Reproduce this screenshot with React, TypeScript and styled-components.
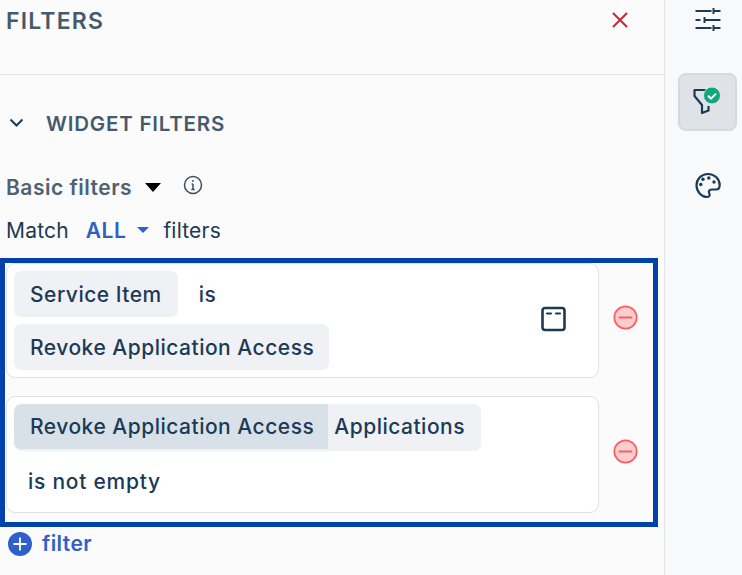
import React from "react";
import styled, { createGlobalStyle } from "styled-components";

const Global = createGlobalStyle`
  html, body { margin: 0; padding: 0; width: 742px; height: 575px; overflow: hidden; background: #fbfbfc; }
  body { font-family: Inter, "Liberation Sans", sans-serif; }
`;
const Page = styled.div`display: flex; width: 742px; height: 575px; overflow: hidden;`;
const Panel = styled.div`width: 664px; flex: none; display: flex; flex-direction: column;`;
const Header = styled.div`
  height: 75px; box-sizing: border-box; border-bottom: 1px solid #e3e4e6; padding: 7px 34px 0 6px;
  display: flex; justify-content: space-between; align-items: flex-start;
`;
const Title = styled.div`font-size: 23px; line-height: 28px; font-weight: 600; color: #465a6c; letter-spacing: 1.2px;`;
const Close = styled.svg`width: 20px; height: 20px; margin-top: 3px; color: #c8282d;`;
const SectionRow = styled.div`display: flex; align-items: center; height: 28px; margin-top: 34px; padding-left: 8px;`;
const Chevron = styled.svg`width: 17px; height: 17px; margin-top: -2px; color: #1d3a52;`;
const SectionTitle = styled.div`margin-left: 21px; font-size: 20.5px; font-weight: 600; color: #465a6c; letter-spacing: 0.8px;`;
const BasicRow = styled.div`display: flex; align-items: center; height: 28px; margin-top: 36px; padding-left: 6px;`;
const BasicLabel = styled.span`font-size: 21px; font-weight: 600; color: #4e6272; letter-spacing: 0.5px;`;
const BlackCaret = styled.span`
  width: 0; height: 0; margin-left: 13px; border-left: 8px solid transparent; border-right: 8px solid transparent;
  border-top: 9px solid #000;
`;
const InfoIcon = styled.svg`width: 20px; height: 20px; margin-left: 22px; margin-top: -4px; color: #3c4e5c;`;
const MatchRow = styled.div`display: flex; align-items: center; height: 28px; margin-top: 15px; padding-left: 6px; font-size: 21px; color: #1d3a52; letter-spacing: 0.2px;`;
const AllLabel = styled.span`margin-left: 17px; font-weight: 600; color: #2f5fcb; letter-spacing: 0.5px;`;
const BlueCaret = styled.span`
  width: 0; height: 0; margin: 0 14px 0 11px; border-left: 6px solid transparent; border-right: 6px solid transparent;
  border-top: 6px solid #2f5fcb;
`;
const Highlight = styled.div`
  box-sizing: border-box; width: 658px; height: 269px; margin-top: 14px; border: 5px solid #0041ab; padding: 0 0 0 1px;
  display: flex; flex-direction: column;
`;
const FilterLine = styled.div<{ $h: number; $top: number }>`
  display: flex; align-items: center; height: ${p => p.$h}px; margin-top: ${p => p.$top}px;
`;
const Card = styled.div`
  box-sizing: border-box; width: 593px; height: 100%; background: #fff; border: 1px solid #dfe1e4; border-radius: 9px;
  padding: 7px; display: flex; position: relative;
`;
const CardBody = styled.div`flex: 1; display: flex; flex-direction: column; gap: 7px;`;
const Line = styled.div`display: flex; align-items: center; font-size: 21px; font-weight: 500; color: #1b3a57; letter-spacing: 0.5px;`;
const Chip = styled.div<{ $right: number }>`
  height: 46px; box-sizing: border-box; display: flex; align-items: center; padding: 0 ${p => p.$right}px 0 16px; background: #eff1f4;
  border-radius: 7px;
`;
const Operator = styled.span`margin-left: 21px;`;
const SplitChip = styled.div`
  display: flex; align-items: flex-start; height: 47px; background: #eff1f4; border-radius: 7px; overflow: hidden;
`;
const SplitLeft = styled.div`height: 45px; display: flex; align-items: center; padding: 0 14px 0 16px; background: #d9e1e8; border-radius: 7px 0 0 7px;`;
const SplitRight = styled.div`height: 45px; display: flex; align-items: center; padding: 0 16px 0 6px;`;
const PlainText = styled(Line)`height: 47px; padding-left: 14px; margin-top: 0; letter-spacing: 0.75px;`;
const SquareIcon = styled.svg`width: 28px; height: 28px; margin: 34px 23px 0 0; color: #1b3a57;`;
const Remove = styled.svg`width: 25px; height: 25px; margin: -6px 0 0 14px;`;
const AddRow = styled.div`display: flex; align-items: center; height: 25px; margin-top: 4px; padding-left: 8px;`;
const AddLabel = styled.span`margin-left: 10px; font-size: 21px; font-weight: 600; color: #2f5fcb; letter-spacing: 0.4px;`;
const Side = styled.div`
  flex: 1; box-sizing: border-box; border-left: 1px solid #e3e5e9; background: #f8f9fa; padding: 6px 0 0 9px;
  display: flex; flex-direction: column; align-items: center; width: 78px;
`;
const SideIcon = styled.svg`width: 28px; height: 28px; color: #1b3a57;`;
const ActiveButton = styled.div`
  width: 59px; height: 58px; flex: none; box-sizing: border-box; margin: 39px 2px 0 0; border-radius: 8px; background: #dfe3e7; border: 2px solid #d5dade;
  display: flex; align-items: center; justify-content: center;
`;
const PaletteIcon = styled(SideIcon)`margin-top: 40px;`;

const RemoveIcon = () => (
  <Remove viewBox="0 0 25 25">
    <circle cx="12.5" cy="12.5" r="11.2" fill="#fdcccc" stroke="#fb5f62" strokeWidth="1.7" />
    <path d="M6.5 12.5h12" stroke="#fb5f62" strokeWidth="1.8" strokeLinecap="round" />
  </Remove>
);

export default function App() {
  return (
    <Page>
      <Global />
      <Panel>
        <Header>
          <Title>FILTERS</Title>
          <Close viewBox="0 0 20 20" fill="none" stroke="currentColor" strokeWidth="2">
            <path d="M3 3l14 14M17 3L3 17" />
          </Close>
        </Header>
        <SectionRow>
          <Chevron viewBox="0 0 17 17" fill="none" stroke="currentColor" strokeWidth="2"><path d="M2.5 5.500l6 6 6-6" /></Chevron>
          <SectionTitle>WIDGET FILTERS</SectionTitle>
        </SectionRow>
        <BasicRow>
          <BasicLabel>Basic filters</BasicLabel>
          <BlackCaret />
          <InfoIcon viewBox="0 0 20 20" fill="none" stroke="currentColor" strokeWidth="1.5">
            <circle cx="10" cy="10" r="8.5" />
            <path d="M10 9v5.500M8.300 14.500h3.400M8.600 9H10" />
            <circle cx="10" cy="6" r="0.9" fill="currentColor" stroke="none" />
          </InfoIcon>
        </BasicRow>
        <MatchRow>
          Match<AllLabel>ALL</AllLabel><BlueCaret />filters
        </MatchRow>
        <Highlight>
          <FilterLine $h={115} $top={0}>
            <Card>
              <CardBody>
                <Line><Chip $right={16}>Service Item</Chip><Operator>is</Operator></Line>
                <Line><Chip $right={15}>Revoke Application Access</Chip></Line>
              </CardBody>
              <SquareIcon viewBox="0 0 28 28" fill="none" stroke="currentColor" strokeWidth="2.6">
                <rect x="2.500" y="3" width="22" height="22" rx="2.5" />
                <path d="M7 8.500h4M16 8.500h4" strokeLinecap="round" strokeWidth="2.2" />
              </SquareIcon>
            </Card>
            <RemoveIcon />
          </FilterLine>
          <FilterLine $h={117} $top={18}>
            <Card>
              <CardBody>
                <Line>
                  <SplitChip>
                    <SplitLeft>Revoke Application Access</SplitLeft>
                    <SplitRight>Applications</SplitRight>
                  </SplitChip>
                </Line>
                <PlainText>is not empty</PlainText>
              </CardBody>
            </Card>
            <RemoveIcon />
          </FilterLine>
        </Highlight>
        <AddRow>
          <svg width="24" height="24" viewBox="0 0 24 24">
            <circle cx="12" cy="12" r="12" fill="#2f5fcb" />
            <path d="M12 5.500v13M5.500 12h13" stroke="#fff" strokeWidth="1.8" />
          </svg>
          <AddLabel>filter</AddLabel>
        </AddRow>
      </Panel>
      <Side>
        <SideIcon viewBox="0 0 28 28" fill="none" stroke="currentColor" strokeWidth="2">
          <path d="M1.500 5h16M19.500 2v6M19.500 5h7M1.500 14h5M10.500 11v6M10.500 14h16M1.500 22h16M19.500 19v6M19.500 22h7" />
        </SideIcon>
        <ActiveButton>
          <svg width="32" height="32" viewBox="0 0 32 32" fill="none">
            <path d="M15.500 4H3.500v6l7.500 9v8l6.500-2.500V20" stroke="#1b3a57" strokeWidth="2.2" strokeLinejoin="round" />
            <circle cx="21" cy="9.500" r="8.500" fill="#12a67e" stroke="#dfe3e7" strokeWidth="1" />
            <path d="M17 9.800l3 2.800 5-5" stroke="#fff" strokeWidth="2" />
          </svg>
        </ActiveButton>
        <PaletteIcon viewBox="0 0 28 28" fill="none" stroke="currentColor" strokeWidth="2.2">
          <path d="M14 3C7.500 3 2.500 8 2.500 14.500S8 26 13 26c3 0 3-2.200 2.200-3.800-.9-1.800.2-3.700 2.300-3.700H22c2.700 0 3.700-2 3.700-4.500C25.700 8 20.500 3 14 3z" />
          <circle cx="6.800" cy="13.500" r="1.700" fill="currentColor" stroke="none" />
          <circle cx="9" cy="8.300" r="1.700" fill="currentColor" stroke="none" />
          <circle cx="14.800" cy="7" r="1.700" fill="currentColor" stroke="none" />
          <circle cx="20" cy="11" r="1.700" fill="currentColor" stroke="none" />
        </PaletteIcon>
      </Side>
    </Page>
  );
}
